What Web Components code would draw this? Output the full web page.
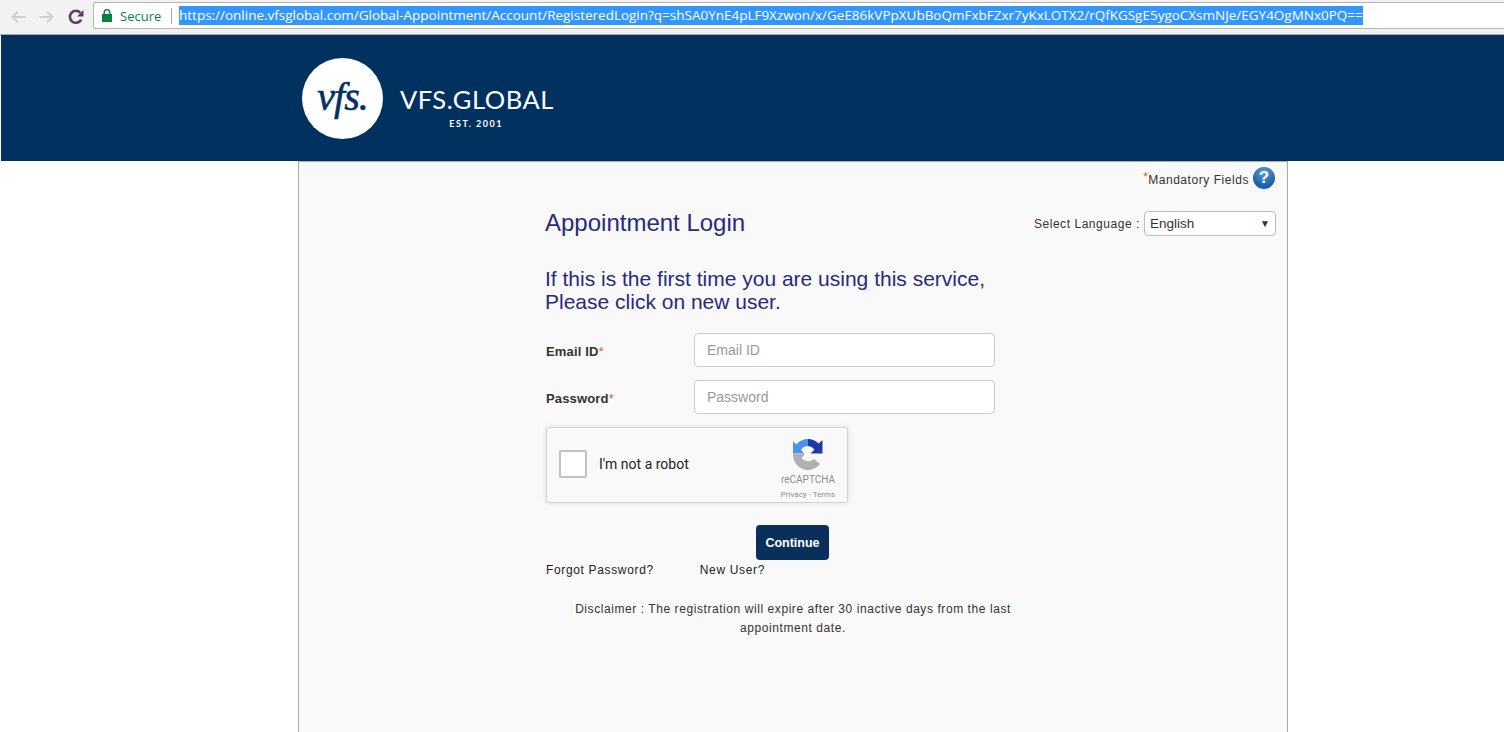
<!DOCTYPE html>
<html lang="en"><head><meta charset="utf-8"><title>Appointment Login</title>
<style>
html,body{margin:0;height:100%;overflow:hidden;background:#fff}
body{font-family:"Liberation Sans",Arial,sans-serif}
vfs-app{height:732px}
</style></head><body>
<vfs-app></vfs-app>
<script>
function def(name,html){
  customElements.define(name,class extends HTMLElement{
    constructor(){super();this.attachShadow({mode:'open'}).innerHTML=html;}
  });
}
def('browser-bar',`<style>
:host{display:flex;align-items:flex-start;height:34px;background:#f2f2f2;border-bottom:1px solid #a9a9a9;overflow:hidden}
.nav{display:flex;align-items:center;gap:13px;padding:7px 0 0 10px;height:19px;width:83px;flex:none}
svg{display:block;flex:none}
.box{flex:none;width:1450px;height:25px;margin-top:2px;background:#fff;border:1px solid #b4b4b4;border-radius:2px;display:flex;align-items:center;font:13.49px "Open Sans",sans-serif}
.lock{margin-left:8px}
.sec{color:#0b8043;margin-left:8px;width:42px;white-space:nowrap;font-size:13px}
.div{width:1px;height:16px;background:#aaa;margin:0 7px 0 9px}
.url{background:#3297fd;color:#fff;height:19px;line-height:19px;white-space:nowrap;margin-top:-1px}
</style>
<div class="nav">
<svg width="16" height="14" viewBox="0 0 16 14"><path d="M15.500 7H2.500M8 1.500 2.500 7 8 12.500" fill="none" stroke="#cfcfcf" stroke-width="2"/></svg>
<svg width="16" height="14" viewBox="0 0 16 14"><path d="M.5 7h13M8 1.500 13.500 7 8 12.500" fill="none" stroke="#cfcfcf" stroke-width="2"/></svg>
<svg width="16" height="16" viewBox="0 0 16 16"><path d="M13.200 10.600A6 6 0 1 1 12.400 3.800" fill="none" stroke="#5b3f5f" stroke-width="2.600"/><path d="M15.500 1v6.500H9z" fill="#5b3f5f"/></svg>
</div>
<div class="box">
<svg class="lock" width="10" height="13" viewBox="0 0 10 13"><rect x="0" y="5" width="10" height="8" fill="#0b8043"/><path d="M2.200 5.500V3.400a2.800 2.800 0 0 1 5.600 0v2.100" fill="none" stroke="#0b8043" stroke-width="1.400"/></svg>
<span class="sec">Secure</span><span class="div"></span>
<span class="url">https://online.vfsglobal.com/Global-Appointment/Account/RegisteredLogin?q=shSA0YnE4pLF9Xzwon/x/GeE86kVPpXUbBoQmFxbFZxr7yKxLOTX2/rQfKGSgE5ygoCXsmNJe/EGY4OgMNx0PQ==</span>
</div>`);
def('vfs-logo',`<style>
:host{display:flex;align-items:flex-start;gap:17px;color:#fff}
.disc{box-sizing:border-box;width:81px;height:81px;padding-bottom:4px;border-radius:50%;background:#fff;color:#00315f;display:flex;align-items:center;justify-content:center;font:italic 40px/1 "Liberation Serif",serif;flex:none}
.disc span{letter-spacing:-1px;-webkit-text-stroke:.6px #00315f}
.words{display:flex;flex-direction:column;align-items:flex-end;margin-top:26px}
.name{font:400 25.500px/30px Lato,sans-serif;letter-spacing:.55px;white-space:nowrap}
.est{font:700 9px/12px Lato,sans-serif;letter-spacing:1.500px;margin:4px 51px 0 0;white-space:nowrap}
</style>
<div class="disc"><span>vfs.</span></div>
<div class="words"><div class="name">VFS.GLOBAL</div><div class="est">EST. 2001</div></div>`);
def('site-header',`<style>
:host{display:block;height:126px;margin-left:1px;background:#00315f;box-sizing:border-box;padding:23px 0 0 301px}
</style><vfs-logo></vfs-logo>`);
def('help-icon',`<style>
:host{display:flex;align-items:center;justify-content:center;width:22px;height:22px;border-radius:50%;background:radial-gradient(circle at 50% 25%,#5a9ad8,#1c5fa8 70%);color:#fff;font:700 17px/22px "Liberation Sans",sans-serif;letter-spacing:0}
</style>?`);
def('lang-select',`<style>
:host{display:flex;align-items:center;justify-content:space-between;box-sizing:border-box;width:132px;height:25px;padding:0 5px;background:#fff;border:1px solid #bbb;border-radius:4px;font:13.500px "Liberation Sans",sans-serif;letter-spacing:0;color:#333}
i{font-style:normal;font-size:10px;color:#333}
</style><span>English</span><i>▼</i>`);
def('form-field',`<style>
:host{display:flex;align-items:center;height:34px;margin-bottom:13px}
label{width:148px;margin-top:2px;font:700 13px "Liberation Sans",sans-serif;letter-spacing:.15px;color:#333;flex:none}
em{font-style:normal;font-weight:400;color:#d2691e}
.in{box-sizing:border-box;width:301px;height:34px;border:1px solid #ccc;border-radius:4px;background:#fff;padding:0 12px;font:14px/32px "Liberation Sans",sans-serif;letter-spacing:0;color:#999}
</style><label><slot></slot><em>*</em></label><div class="in"><slot name="ph"></slot></div>`);
def('captcha-box',`<style>
:host{display:flex;box-sizing:border-box;width:302px;height:76px;background:#f9f9f9;border:1px solid #d3d3d3;border-radius:3px;box-shadow:0 0 4px 1px rgba(0,0,0,.08);font-family:Roboto,sans-serif;letter-spacing:0;align-items:flex-start}
.cb{box-sizing:border-box;width:28px;height:28px;margin:22px 12px 0 12px;background:#fff;border:2px solid #c1c1c1;border-radius:2px;flex:none}
.t{font-size:14px;line-height:18px;color:#222;margin-top:27px;flex:none;width:174px}
.brand{width:70px;display:flex;flex-direction:column;align-items:center;margin-top:11px;color:#8d8d8d}
.r{font-size:10px;line-height:12px;margin-top:3px}
.p{font-size:8px;line-height:10px;margin-top:4px}
svg{display:block}
</style>
<div class="cb"></div><div class="t">I'm not a robot</div>
<div class="brand"><svg width="30" height="32" viewBox="0 0 30 32">
<path d="M15 0A15 15 0 0 0 3.500 5.500L0 2.500V14.500H11.500L8 11A9 9 0 0 1 15 7Z" fill="#4a90f5"/>
<path d="M15 0A15 15 0 0 1 25.500 4.500L29.500 1V14.500H17.500L21.500 10.500A9 9 0 0 0 15 7Z" fill="#1c3aa9"/>
<path d="M0 15H12L8.500 19A8.500 8.500 0 0 0 21 20L27 25A15 15 0 0 1 0 16Z" fill="#b0b0b0"/>
</svg><div class="r">reCAPTCHA</div><div class="p">Privacy - Terms</div></div>`);
def('login-panel',`<style>
:host{display:block;box-sizing:border-box;width:990px;margin-left:298px;flex:1;background:#f9f9f9;border:1px solid #a9a9a9;border-bottom:0;font:12px "Liberation Sans",sans-serif;letter-spacing:.45px;color:#333}
.mand{display:flex;justify-content:flex-end;align-items:flex-start;gap:4px;padding:5px 12px 0 0;height:22px}
.mand span{margin-top:6px;line-height:14px;white-space:nowrap;letter-spacing:.55px}
.mand sup{color:#d2691e;font-size:13px;line-height:0;vertical-align:baseline;position:relative;top:-3px;letter-spacing:0}
.head{display:flex;justify-content:space-between;align-items:center;margin:22px 11px 0 246px;height:25px}
h1{margin:-2px 0 0;font:400 24px/25px "Liberation Sans",sans-serif;letter-spacing:0;color:#262b80;white-space:nowrap}
.lang{display:flex;align-items:center;gap:4px;white-space:nowrap;letter-spacing:.55px}
h2{margin:31px 0 0 246px;font:400 21px/23px "Liberation Sans",sans-serif;letter-spacing:0;color:#262b80}
.form{margin:20px 0 0 247px;width:449px}
.act{display:flex;justify-content:flex-end;margin:22px 0 0}
.go{box-sizing:border-box;width:73px;height:35px;margin:0 166px 0 0;background:#0b2f5b;color:#fff;border:0;border-radius:4px;font:700 12.500px "Liberation Sans",sans-serif;padding:0}
.links{display:flex;gap:46px;margin-top:2px;line-height:16px;color:#222;letter-spacing:.65px}
.dis{margin:22px 0 0 247px;width:494px;text-align:center;line-height:19px;letter-spacing:.57px;color:#333}
</style>
<div class="mand"><span><sup>*</sup>Mandatory Fields</span><help-icon></help-icon></div>
<div class="head"><h1>Appointment Login</h1><div class="lang">Select Language : <lang-select></lang-select></div></div>
<h2>If this is the first time you are using this service,<br>Please click on new user.</h2>
<div class="form">
<form-field>Email ID<span slot="ph">Email ID</span></form-field>
<form-field>Password<span slot="ph">Password</span></form-field>
<captcha-box></captcha-box>
<div class="act"><button class="go">Continue</button></div>
<div class="links"><span>Forgot Password?</span><span>New User?</span></div>
</div>
<div class="dis">Disclaimer : The registration will expire after 30 inactive days from the last appointment date.</div>`);
def('vfs-app',`<style>:host{display:flex;flex-direction:column;height:732px}</style><browser-bar></browser-bar><site-header></site-header><login-panel></login-panel>`);
</script></body></html>
